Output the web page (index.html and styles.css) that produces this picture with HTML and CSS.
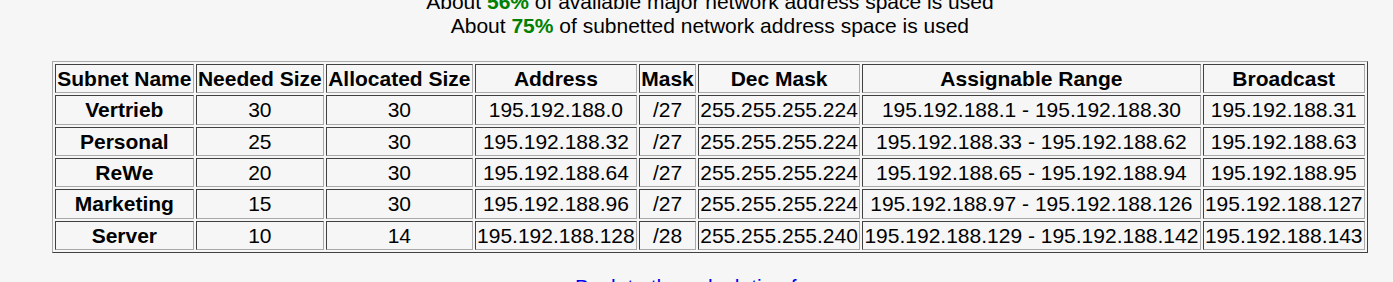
FILE: index.html
```html
<!DOCTYPE html>
<html lang="en">
<head>
<meta charset="utf-8">
<title>VLSM Subnet Calculation</title>
<link rel="stylesheet" href="styles.css">
</head>
<body>
<div class="page">
  <div class="usage">
    <div>About <span class="pct">56%</span> of available major network address space is used</div>
    <div>About <span class="pct">75%</span> of subnetted network address space is used</div>
  </div>
  <table class="subnets">
    <thead>
      <tr>
        <th>Subnet Name</th><th>Needed Size</th><th>Allocated Size</th><th>Address</th><th>Mask</th><th>Dec Mask</th><th>Assignable Range</th><th>Broadcast</th>
      </tr>
    </thead>
    <tbody>
      <tr><th>Vertrieb</th><td>30</td><td>30</td><td>195.192.188.0</td><td>/27</td><td>255.255.255.224</td><td>195.192.188.1 - 195.192.188.30</td><td>195.192.188.31</td></tr>
      <tr><th>Personal</th><td>25</td><td>30</td><td>195.192.188.32</td><td>/27</td><td>255.255.255.224</td><td>195.192.188.33 - 195.192.188.62</td><td>195.192.188.63</td></tr>
      <tr><th>ReWe</th><td>20</td><td>30</td><td>195.192.188.64</td><td>/27</td><td>255.255.255.224</td><td>195.192.188.65 - 195.192.188.94</td><td>195.192.188.95</td></tr>
      <tr><th>Marketing</th><td>15</td><td>30</td><td>195.192.188.96</td><td>/27</td><td>255.255.255.224</td><td>195.192.188.97 - 195.192.188.126</td><td>195.192.188.127</td></tr>
      <tr><th>Server</th><td>10</td><td>14</td><td>195.192.188.128</td><td>/28</td><td>255.255.255.240</td><td>195.192.188.129 - 195.192.188.142</td><td>195.192.188.143</td></tr>
    </tbody>
  </table>
  <p class="back"><a href="#">Back to the calculation form</a></p>
</div>
</body>
</html>
```

FILE: styles.css
```css
html, body {
  margin: 0;
  background: #f6f6f6;
}

body {
  font-family: "Liberation Sans", Arial, sans-serif;
  font-size: 21px;
  color: #000;
}

.page {
  width: fit-content;
  margin-left: 52px;
  text-align: center;
}

.usage {
  margin-top: -10px;
  line-height: 24px;
}

.pct {
  color: #008000;
  font-weight: bold;
}

.subnets {
  margin-top: 23px;
  border-collapse: separate;
  border-spacing: 2px;
  border: 1px solid;
  border-color: #a9a9a9 #404040 #404040 #a9a9a9;
}

.subnets th,
.subnets td {
  padding: 1px 1.25px;
  line-height: 25.33px;
  text-align: center;
  border: 1px solid;
  border-color: #404040 #a9a9a9 #a9a9a9 #404040;
}

.subnets th {
  font-weight: bold;
}

.back {
  margin: 22px 12px 0 0;
  line-height: 24px;
}

.back a {
  color: #0000ee;
  text-decoration: none;
}
```
